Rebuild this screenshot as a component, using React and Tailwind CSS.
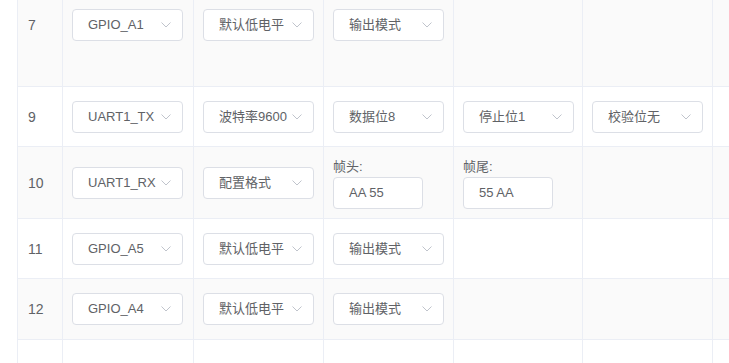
import React from 'react'

const font = { fontFamily: '"Liberation Sans", "Noto Sans CJK SC", sans-serif' }

function Chevron() {
  return (
    <svg width="10" height="6" viewBox="0 0 10 6" fill="none" className="shrink-0">
      <path d="M0.5 0.5 L5 5 L9.5 0.5" stroke="#c0c4cc" strokeWidth="1" />
    </svg>
  )
}

function Select({ value }) {
  return (
    <div className="w-[111px] h-8 flex items-center justify-between pl-[15px] pr-[11px] bg-white border border-[#dcdfe6] rounded text-[13px] text-[#606266] whitespace-nowrap">
      <span>{value}</span>
      <Chevron />
    </div>
  )
}

function FrameInput({ label, value }) {
  return (
    <div className="flex flex-col">
      <span className="text-[13px] leading-5 text-[#606266]">{label}</span>
      <div className="w-[90px] h-8 flex items-center pl-[15px] bg-white border border-[#dcdfe6] rounded text-[13px] text-[#606266]">
        {value}
      </div>
    </div>
  )
}

const widths = ['w-[45px]', 'w-[131px]', 'w-[130px]', 'w-[130px]', 'w-[129px]', 'w-[130px]']

function Row({ no, cells = [], striped, height, top }) {
  return (
    <div
      className={`flex border-b border-[#ebeef5] ${height} ${striped ? 'bg-[#fafafa]' : 'bg-white'} ${top ? 'items-start' : 'items-stretch'}`}
    >
      {widths.map((w, i) => (
        <div
          key={i}
          className={`${w} shrink-0 self-stretch border-r border-[#ebeef5] flex ${top ? 'items-start pt-[9px]' : 'items-center'} ${i === 0 ? 'pl-[10px]' : 'pl-[9px]'}`}
        >
          {i === 0 ? (
            <div className="h-8 flex items-center text-sm text-[#606266]">{no}</div>
          ) : (
            cells[i - 1] || null
          )}
        </div>
      ))}
      <div className="flex-1" />
    </div>
  )
}

export default function App() {
  return (
    <div className="h-[363px] overflow-hidden bg-white" style={font}>
      <div className="ml-[17px] border-l border-[#ebeef5]">
        <Row
          no="7"
          striped
          top
          height="h-[87px]"
          cells={[<Select value="GPIO_A1" />, <Select value="默认低电平" />, <Select value="输出模式" />]}
        />
        <Row
          no="9"
          height="h-[60px]"
          cells={[
            <Select value="UART1_TX" />,
            <Select value="波特率9600" />,
            <Select value="数据位8" />,
            <Select value="停止位1" />,
            <Select value="校验位无" />,
          ]}
        />
        <Row
          no="10"
          striped
          height="h-[72px]"
          cells={[
            <Select value="UART1_RX" />,
            <Select value="配置格式" />,
            <FrameInput label="帧头:" value="AA 55" />,
            <FrameInput label="帧尾:" value="55 AA" />,
          ]}
        />
        <Row
          no="11"
          height="h-[60px]"
          cells={[<Select value="GPIO_A5" />, <Select value="默认低电平" />, <Select value="输出模式" />]}
        />
        <Row
          no="12"
          striped
          height="h-[61px]"
          cells={[<Select value="GPIO_A4" />, <Select value="默认低电平" />, <Select value="输出模式" />]}
        />
        <Row no="" height="h-[60px]" />
      </div>
    </div>
  )
}
